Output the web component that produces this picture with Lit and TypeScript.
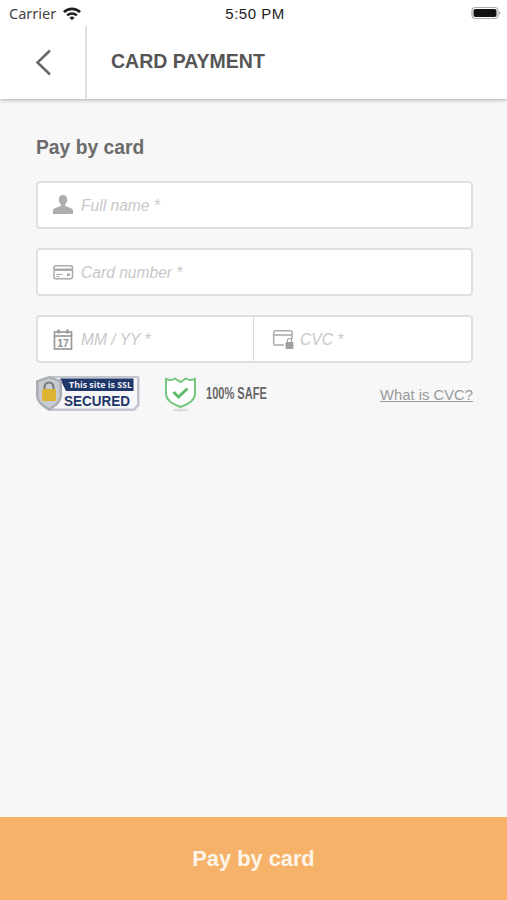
import { LitElement, html, css } from "lit";
import { customElement } from "lit/decorators.js";

@customElement("app-root")
export class AppRoot extends LitElement {
  static styles = css`
    :host { display: flex; flex-direction: column; height: 900px; width: 507px; overflow: hidden; background: #f7f7f7; font-family: "Liberation Sans", Arial, sans-serif; }
    .status { height: 26px; background: #fff; display: grid; grid-template-columns: 1fr auto 1fr; align-items: center; padding: 0 6px 0 9px; flex: none; box-sizing: border-box; position: relative; z-index: 1; }
    .status .left { display: flex; align-items: center; gap: 6px; font-family: "Noto Sans", "Liberation Sans", sans-serif; font-size: 14.5px; color: #444; }
    .status .time { font-size: 15px; font-weight: 500; color: #222; font-family: "Liberation Sans", sans-serif; letter-spacing: .5px; }
    .status .right { display: flex; justify-content: flex-end; }
    header { height: 73px; flex: none; background: #fff; display: flex; box-shadow: 0 1px 4px rgba(0,0,0,.3); position: relative; }
    .back { border-right: 2px solid #e2e2e2; display: flex; align-items: center; padding: 0 0 1px 35px; box-sizing: content-box; width: 50px; }
    h1 { margin: 0 0 2px 24px; align-self: center; font-size: 19.5px; font-weight: 700; color: #555; }
    main { flex: 1; padding: 37px 34px 0 36px; display: flex; flex-direction: column; }
    h2 { margin: 0 0 21px; font-size: 19.3px; line-height: 24px; font-weight: 700; color: #6b6b6b; }
    .field { height: 48px; box-sizing: border-box; background: #fff; border: 2px solid #dfdfdf; border-radius: 4px; display: flex; align-items: center; margin-bottom: 19px; }
    .cell { display: flex; align-items: center; flex: 1; height: 100%; padding-left: 15px; gap: 6px; }
    .cell:first-child.half { flex: 0 0 200px; }
    .cell + .cell { border-left: 1.5px solid #d8d8d8; padding-left: 18px; }
    .cell svg { flex: none; width: 22px; height: 22px; }
    .ph { font-size: 15.6px; font-style: italic; color: #c8c8c8; padding-top: 2px; }
    .field.split { margin-bottom: 12px; }
    .trust { display: flex; align-items: center; height: 38px; }
    .safe { margin-left: 24px; display: flex; align-items: center; gap: 9px; }
    .safe span { font-family: "Liberation Sans", sans-serif; font-weight: 700; font-size: 16px; color: #666; transform: scaleX(.69); transform-origin: left; white-space: nowrap; }
    a { margin-left: auto; font-size: 14.8px; color: #9a9a9a; text-decoration: underline; padding-top: 1px; }
    .pay { height: 83px; flex: none; background: #f5b268; color: #fdf5ea; font-size: 21.8px; font-weight: 700; display: flex; align-items: center; justify-content: center; }
  `;

  render() {
    return html`
      <div class="status">
        <div class="left">Carrier
          <svg width="20" height="15" viewBox="0 0 20 15"><path d="M1 5.200a13 13 0 0 1 18 0L17.200 7a10.500 10.500 0 0 0-14.400 0z M4.300 8.400a8.400 8.400 0 0 1 11.400 0L14 10.200a5.900 5.900 0 0 0-8 0z M7.400 11.500a4 4 0 0 1 5.200 0L10 14.200z" fill="#222"/></svg>
        </div>
        <div class="time">5:50 PM</div>
        <div class="right">
          <svg width="30" height="14" viewBox="0 0 30 14"><rect x="1" y="1.500" width="26" height="11" rx="3.500" fill="none" stroke="#aaa" stroke-width="1.200"/><rect x="2.500" y="3" width="23" height="8" rx="2" fill="#111"/><path d="M28 5.500c1 .3 1.500.8 1.500 1.500s-.5 1.200-1.500 1.500z" fill="#aaa"/></svg>
        </div>
      </div>
      <header>
        <div class="back">
          <svg width="17" height="27" viewBox="0 0 17 27"><path d="M15 1.500 2.500 13.500 15 25.500" fill="none" stroke="#6a6a6a" stroke-width="2.600"/></svg>
        </div>
        <h1>CARD PAYMENT</h1>
      </header>
      <main>
        <h2>Pay by card</h2>
        <div class="field"><div class="cell">
          <svg viewBox="0 0 22 22"><path d="M10 1c2.800 0 4.200 2 4.200 4.600 0 2-.8 3.800-2 4.800v1.500c1.500.9 6.800 1.800 7.800 4.100V20H0v-4c1-2.300 6.300-3.200 7.800-4.100v-1.500c-1.200-1-2-2.800-2-4.800C5.800 3 7.200 1 10 1z" fill="#adadad"/></svg>
          <span class="ph">Full name *</span>
        </div></div>
        <div class="field"><div class="cell">
          <svg viewBox="0 0 22 22"><rect x="1" y="4.800" width="18.500" height="13" rx="2" fill="none" stroke="#aaa" stroke-width="1.500"/><rect x="1.200" y="7.500" width="18" height="2.500" fill="#aaa"/><path d="M3.500 13.500h6M3.500 15.500h3" stroke="#aaa" fill="none"/><rect x="14" y="12.500" width="3" height="2.500" fill="#aaa"/></svg>
          <span class="ph">Card number *</span>
        </div></div>
        <div class="field split">
          <div class="cell half">
            <svg viewBox="0 0 22 22"><rect x="1.500" y="4" width="17" height="17" fill="none" stroke="#999" stroke-width="1.700"/><path d="M1.500 8h17" stroke="#999" stroke-width="1.700"/><path d="M5.500 1.500v4M14.500 1.500v4" stroke="#999" stroke-width="2.400"/><text x="10" y="18.800" text-anchor="middle" font-family="Liberation Sans" font-size="10.500" font-weight="700" fill="#8f8f8f">17</text></svg>
            <span class="ph">MM / YY *</span>
          </div>
          <div class="cell">
            <svg viewBox="0 0 22 22"><path d="M12 17H3.500A1.800 1.800 0 0 1 1.700 15.200V4.500A1.800 1.800 0 0 1 3.500 2.700h14.800a1.800 1.800 0 0 1 1.800 1.800V11" fill="none" stroke="#aaa" stroke-width="1.500"/><path d="M2 7h18" stroke="#aaa" stroke-width="1.600"/><rect x="13.500" y="14" width="8" height="7" rx="1" fill="#a0a0a0"/><path d="M15.500 14v-1.500a2 2 0 0 1 4 0V14" fill="none" stroke="#a0a0a0" stroke-width="1.200"/></svg>
            <span class="ph">CVC *</span>
          </div>
        </div>
        <div class="trust">
          <svg width="104" height="38" viewBox="0 0 104 38">
            <path d="M14 1h88a1.500 1.500 0 0 1 1.500 1.500v28l-5 5.500H14z" fill="#c2c6cc"/>
            <path d="M16 3h85v26.500l-3.500 4H16z" fill="#f6f6f8"/>
            <path d="M24 3.500h73.500v12.500H30z" fill="#1e3668"/>
            <text x="33" y="12.500" font-family="Open Sans, Liberation Sans" font-size="8.500" font-weight="700" fill="#e8ecf5" textLength="63" lengthAdjust="spacingAndGlyphs">This site is SSL</text>
            <text x="28" y="31" font-family="Liberation Sans" font-size="15" font-weight="700" fill="#1e3668" textLength="66" lengthAdjust="spacingAndGlyphs">SECURED</text>
            <path d="M13 1 26 5.500V20c0 7-6 12-13 16C6 32 0 27 0 20V5.500z" fill="#a9adb3"/>
            <path d="M13 3.500 23.500 7V20C23.500 26 18.500 30 13 33 7.500 30 2.500 26 2.500 20V7z" fill="#c8cbd0"/>
            <path d="M8.500 15v-3a4.500 4.500 0 0 1 9 0v3" fill="none" stroke="#74777b" stroke-width="2"/>
            <rect x="6" y="14" width="14" height="12" rx="1" fill="#dcb432"/>
          </svg>
          <div class="safe">
            <svg width="33" height="36" viewBox="0 0 33 36">
              <path d="M2 3c4 1.500 7 1 9-.5L16.500 6 22 2.500c2 1.500 5 2 9 .5v15c0 6-6 10-14.500 13C8 28 2 24 2 18z" fill="#fff" stroke="#76c77f" stroke-width="2"/>
              <path d="M9.500 16l5 5 9-8.500" fill="none" stroke="#5fb96b" stroke-width="3"/>
              <ellipse cx="16.500" cy="34" rx="8" ry="1.500" fill="#d9dcd9"/>
            </svg>
            <span>100% SAFE</span>
          </div>
          <a>What is CVC?</a>
        </div>
      </main>
      <div class="pay">Pay by card</div>
    `;
  }
}
